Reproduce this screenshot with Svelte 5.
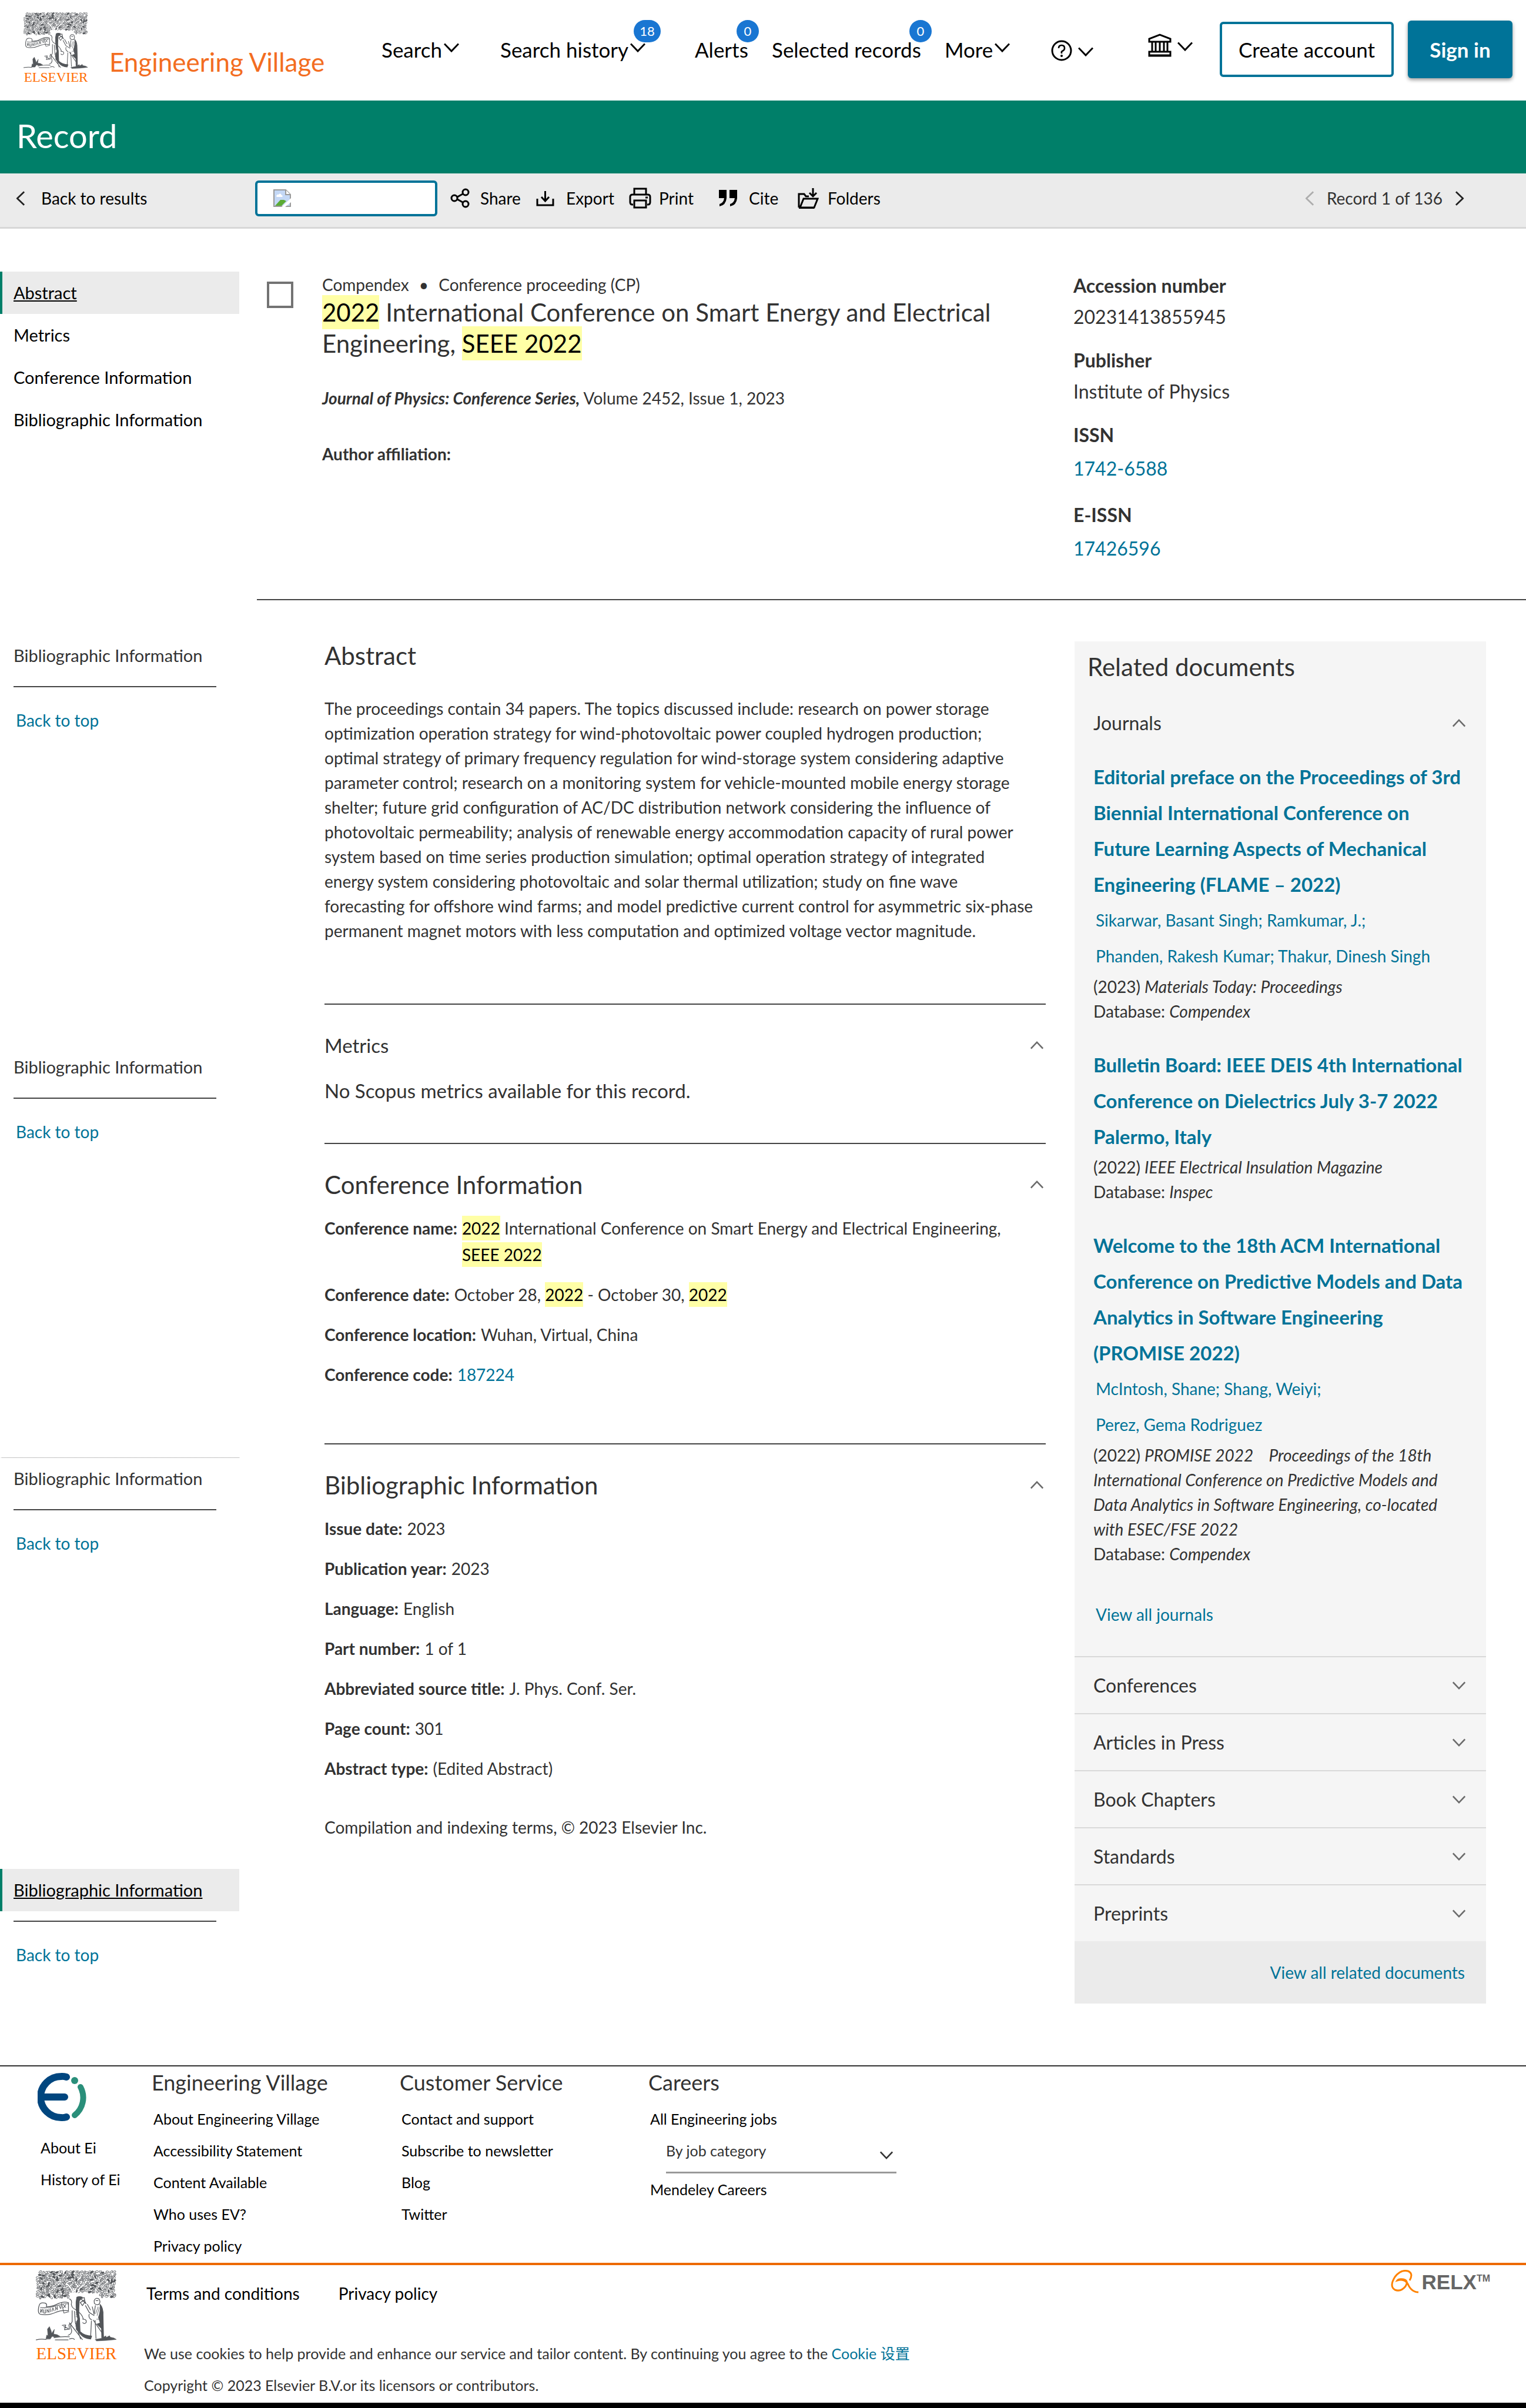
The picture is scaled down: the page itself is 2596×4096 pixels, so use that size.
<script>
    const footerColumns = [
        {
            title: 'Engineering Village',
            links: ['About Engineering Village', 'Accessibility Statement', 'Content Available', 'Who uses EV?', 'Privacy policy']
        },
        {
            title: 'Customer Service',
            links: ['Contact and support', 'Subscribe to newsletter', 'Blog', 'Twitter']
        }
    ];

    const sections = ['Abstract', 'Metrics', 'Conference Information', 'Bibliographic Information'];

    const sideGroups = [{}, {}, { dotted: true }, { active: true }];

    const facts = [
        { name: 'Accession number', value: '20231413855945' },
        { name: 'Publisher', value: 'Institute of Physics' },
        { name: 'ISSN', value: '1742-6588', link: true },
        { name: 'E-ISSN', value: '17426596', link: true }
    ];

    const bibliographic = [
        ['Issue date:', '2023'],
        ['Publication year:', '2023'],
        ['Language:', 'English'],
        ['Part number:', '1 of 1'],
        ['Abbreviated source title:', 'J. Phys. Conf. Ser.'],
        ['Page count:', '301'],
        ['Abstract type:', '(Edited Abstract)']
    ];

    const documents = [
        {
            title: 'Editorial preface on the Proceedings of 3rd Biennial International Conference on Future Learning Aspects of Mechanical Engineering (FLAME – 2022)',
            authors: ['Sikarwar, Basant Singh; Ramkumar, J.;', 'Phanden, Rakesh Kumar; Thakur, Dinesh Singh'],
            year: '(2023)',
            source: 'Materials Today: Proceedings',
            database: 'Compendex'
        },
        {
            title: 'Bulletin Board: IEEE DEIS 4th International Conference on Dielectrics July 3-7 2022 Palermo, Italy',
            authors: [],
            year: '(2022)',
            source: 'IEEE Electrical Insulation Magazine',
            database: 'Inspec'
        },
        {
            title: 'Welcome to the 18th ACM International Conference on Predictive Models and Data Analytics in Software Engineering (PROMISE 2022)',
            authors: ['McIntosh, Shane; Shang, Weiyi;', 'Perez, Gema Rodriguez'],
            year: '(2022)',
            source: 'PROMISE 2022 \u00a0\u00a0 Proceedings of the 18th International Conference on Predictive Models and Data Analytics in Software Engineering, co-located with ESEC/FSE 2022',
            database: 'Compendex'
        }
    ];

    const panels = ['Conferences', 'Articles in Press', 'Book Chapters', 'Standards', 'Preprints'];

    // leaves of the tree, same pattern on every load
    let seed = 7;
    const random = () => {
        seed = (seed * 16807) % 2147483647;
        return seed / 2147483647;
    };

    const fills = ['#fff', '#fff', '#e4e4e5', '#b9babc', '#53565a'];
    const leaves = [];
    for (let row = 0; row < 10; row++) {
        for (let col = 0; col < 29; col++) {
            const x = 184 + col * 22 + random() * 14 - 7;
            const y = 60 + row * 22 + random() * 12 - 6;
            if (y > 220 && x > 430 && x < 690) continue;
            if (y > 262 && x > 400) continue;
            if (x < 200 && y < 90) continue;
            leaves.push({ x, y, angle: random() * 180, fill: fills[Math.floor(random() * 5)] });
        }
    }
</script>

{#snippet chevron(dir = 'down', size = 'md')}
    <svg class="chevron {size} {dir}" viewBox="0 0 26 16" aria-hidden="true">
        <path d="M1 1.500 13 14 25 1.500" />
    </svg>
{/snippet}

{#snippet tree()}
    <svg class="tree" viewBox="168 45 657 575" aria-hidden="true">
        <g stroke="#53565a" stroke-width="4">
            {#each leaves as leaf}
                <ellipse cx={leaf.x} cy={leaf.y} rx="14" ry="7" fill={leaf.fill} transform="rotate({leaf.angle} {leaf.x} {leaf.y})" />
            {/each}
        </g>
        <path d="M470 270C468 200 450 180 430 165M505 262C500 210 520 180 560 160M488 250V190M470 265C480 240 480 220 470 190" fill="none" stroke="#fff" stroke-width="8" />
        <g fill="none" stroke="#53565a" stroke-width="6" stroke-linecap="round" stroke-linejoin="round">
            <path fill="#fff" d="M196 325Q205 300 245 310Q262 320 252 338Q300 340 340 318Q390 292 432 306V372Q380 362 330 384Q270 412 205 400Q188 396 188 368Q188 345 196 325Z" />
            <path stroke-width="5" d="M206 358V385L220 358V385M232 362V390H246V362M258 385V360L274 385V356M286 380V352M298 376 306 348 316 372M328 368V340L342 364V336M356 330 368 354M372 326V350M390 322 410 345M412 320 392 348M205 345Q260 355 340 330T430 318M375 305 395 390 435 380" />
            <path d="M440 275Q465 285 455 320Q460 350 490 362Q545 400 552 438M462 370V460Q440 490 458 530Q460 560 430 570M480 375 488 470 530 600M440 470 545 605M548 440Q582 440 576 466Q562 484 548 468" />
            <path fill="#53565a" d="M500 262Q520 252 545 262L520 290Q515 350 516 400L522 436L522 446L526 540Q560 575 620 576L612 600Q560 596 535 568L496 522V470L508 440Q492 380 494 300Z" />
            <path d="M492 390H515M492 405H515M492 420H515M490 460H520M490 478H520M488 495H520" stroke-width="4" />
            <path d="M530 275 560 265 566 300 545 330 528 305 560 285 575 315 550 290ZM570 330 600 385 640 410M585 320 610 365M600 400Q590 430 620 445M625 340 640 400 650 330M640 290Q650 262 678 275Q695 295 680 318Q660 330 642 312ZM655 290H672M618 455 612 575M648 450 655 595M634 448 662 490 700 545" />
            <path fill="#53565a" d="M688 320Q715 350 712 410L716 585 702 590 700 515 664 480 690 470 676 425Q696 370 688 320Z" />
            <path stroke-width="4" d="M672 340 652 395M682 345 664 410M690 440 660 440" />
            <path fill="#53565a" stroke-width="3" d="M250 600 256 568 266 575 262 520 278 500 292 535 296 555 318 522 312 560 340 565 365 580 320 585 300 578 285 600Z" />
            <path d="M170 607Q210 598 250 604M315 590Q370 578 440 582M325 607H430M440 600Q470 590 480 604M382 490 410 487 400 525 440 520 436 485 450 475M395 500 430 515" />
            <path fill="#53565a" stroke-width="3" d="M650 603 700 595 735 575 738 588 765 574 770 585 800 592 820 604 740 612 660 616Z" />
        </g>
    </svg>
{/snippet}

<header class="top">
    <a class="brand" href="#home">
        <span class="elsevier">{@render tree()}<span>ELSEVIER</span></span>
        <span class="product">Engineering Village</span>
    </a>
    <nav class="menu" aria-label="Main">
        <div><button type="button">Search{@render chevron()}</button></div>
        <div><button type="button">Search history{@render chevron()}<span class="badge">18</span></button></div>
        <div><button type="button">Alerts<span class="badge">0</span></button></div>
        <div><button type="button">Selected records<span class="badge">0</span></button></div>
        <div><button type="button">More{@render chevron()}</button></div>
        <div>
            <button type="button" class="icon-menu help" aria-label="Help">
                <svg width="36" height="36" viewBox="0 0 36 36" aria-hidden="true">
                    <circle cx="18" cy="18" r="16" fill="none" stroke="#000" stroke-width="3" />
                    <path d="M13 14Q13 9 18 9T23 14Q23 17 20 18.500T18 22V23" fill="none" stroke="#000" stroke-width="2.600" />
                    <circle cx="18" cy="27" r="2" />
                </svg>
                {@render chevron()}
            </button>
        </div>
        <div>
            <button type="button" class="icon-menu institution" aria-label="Institution">
                <svg width="40" height="40" viewBox="0 0 40 40" fill="none" stroke="#000" stroke-width="3" aria-hidden="true">
                    <path d="M2 14V9L20 2 38 9V14ZM7 15V31M13 15V31M20 15V31M27 15V31M33 15V31M2 38V31H38V38Z" />
                    <path d="M2 37H38" />
                </svg>
                {@render chevron()}
            </button>
        </div>
    </nav>
    <div class="account">
        <button type="button" class="create">Create account</button>
        <button type="button" class="signin">Sign in</button>
    </div>
</header>

<div class="title-bar"><h1>Record</h1></div>

<div class="toolbar">
    <a class="back" href="#results">{@render chevron('left', 'lg')}Back to results</a>
    <div class="tools">
        <button type="button" class="provider" aria-label="Full text">
            <svg width="30" height="30" viewBox="0 0 30 30" aria-hidden="true">
                <path d="M1 1H21L29 9V29H1Z" fill="#c4d8f6" stroke="#9a9a9a" stroke-width="2" />
                <path d="M21 1V9H29" fill="#fff" stroke="#9a9a9a" stroke-width="2" />
                <path d="M5 12Q6 8 9 9Q12 5 14 10Q17 11 15 13H6Z" fill="#fff" />
                <path d="M3 28 12 18H18L22 20 14 28Z" fill="#5bab35" />
                <path d="M14 30 30 15V22L20 30Z" fill="#fff" />
            </svg>
        </button>
        <button type="button" class="tool">
            <svg width="33" height="34" viewBox="0 0 33 34" fill="none" stroke="#000" stroke-width="3" aria-hidden="true">
                <circle cx="7" cy="17" r="5" /><circle cx="26" cy="7" r="5" /><circle cx="26" cy="27" r="5" />
                <path d="M12 15 21 10M12 19 21 24" />
            </svg>
            <span>Share</span>
        </button>
        <button type="button" class="tool">
            <svg width="31" height="34" viewBox="0 0 31 34" fill="none" stroke="#000" stroke-width="3" aria-hidden="true">
                <path d="M2 18V29H29V18M15.500 5V22M9 15 15.500 22 22 15" />
            </svg>
            <span>Export</span>
        </button>
        <button type="button" class="tool">
            <svg width="38" height="36" viewBox="0 0 38 36" fill="none" stroke="#000" stroke-width="3" aria-hidden="true">
                <path d="M9 12V2H29V12M7 29H6Q2 29 2 25V16Q2 12 6 12H32Q36 12 36 16V25Q36 29 32 29H31M9 22H29V34H9Z" />
                <path d="M28 17H32" />
            </svg>
            <span>Print</span>
        </button>
        <button type="button" class="tool">
            <svg width="31" height="28" viewBox="0 0 31 28" aria-hidden="true">
                <path d="M0 0H13V14Q12 26 1 28V24Q8 22 9 14H0ZM18 0H31V14Q30 26 19 28V24Q26 22 27 14H18Z" />
            </svg>
            <span>Cite</span>
        </button>
        <button type="button" class="tool">
            <svg width="36" height="38" viewBox="0 0 36 38" fill="none" stroke="#000" stroke-width="3" aria-hidden="true">
                <path d="M2 35V12H11L14 16H19M4 35 10 20H34L28 35ZM2 35.500H28M26 2V15M20 10 26 16 32 10" />
            </svg>
            <span>Folders</span>
        </button>
    </div>
    <div class="pager">
        <button type="button" disabled aria-label="Previous record">{@render chevron('left', 'lg')}</button>
        <span>Record 1 of 136</span>
        <button type="button" aria-label="Next record">{@render chevron('right', 'lg')}</button>
    </div>
</div>

<div class="page">
    <aside class="side">
        <nav aria-label="Sections">
            {#each sections as section, i}
                <a class="side-item" class:active={i === 0} href="#section{i}">{section}</a>
            {/each}
        </nav>
        <div class="groups">
            {#each sideGroups as group}
                <div>
                    <a class="side-item grey" class:active={group.active} class:dotted={group.dotted} href="#section3">Bibliographic Information</a>
                    <hr />
                    <a class="to-top" href="#top">Back to top</a>
                </div>
            {/each}
        </div>
    </aside>

    <main>
        <section class="record">
            <input type="checkbox" aria-label="Select record" />
            <div class="summary">
                <p>Compendex <span class="dot">•</span> Conference proceeding (CP)</p>
                <h2><mark>2022</mark> International Conference on Smart Energy and Electrical Engineering, <mark>SEEE 2022</mark></h2>
                <p class="journal"><b><i>Journal of Physics: Conference Series,</i></b> Volume 2452, Issue 1, 2023</p>
                <p class="affiliation"><b>Author affiliation:</b></p>
            </div>
            <dl class="facts">
                {#each facts as fact}
                    <div>
                        <dt>{fact.name}</dt>
                        {#if fact.link}
                            <dd class="linked"><a href="#search">{fact.value}</a></dd>
                        {:else}
                            <dd>{fact.value}</dd>
                        {/if}
                    </div>
                {/each}
            </dl>
        </section>

        <div class="columns">
            <div class="content">
                <section class="block abstract" id="section0">
                    <h3>Abstract</h3>
                    <p>
                        The proceedings contain 34 papers. The topics discussed include: research on power storage<br />
                        optimization operation strategy for wind-photovoltaic power coupled hydrogen production;<br />
                        optimal strategy of primary frequency regulation for wind-storage system considering adaptive<br />
                        parameter control; research on a monitoring system for vehicle-mounted mobile energy storage<br />
                        shelter; future grid configuration of AC/DC distribution network considering the influence of<br />
                        photovoltaic permeability; analysis of renewable energy accommodation capacity of rural power<br />
                        system based on time series production simulation; optimal operation strategy of integrated<br />
                        energy system considering photovoltaic and solar thermal utilization; study on fine wave<br />
                        forecasting for offshore wind farms; and model predictive current control for asymmetric six-phase<br />
                        permanent magnet motors with less computation and optimized voltage vector magnitude.
                    </p>
                </section>

                <section class="block metrics" id="section1">
                    <h3 class="small"><button type="button">Metrics{@render chevron('up', 'sm')}</button></h3>
                    <p>No Scopus metrics available for this record.</p>
                </section>

                <section class="block conference" id="section2">
                    <h3><button type="button">Conference Information{@render chevron('up', 'sm')}</button></h3>
                    <dl class="list">
                        <div>
                            <dt>Conference name:</dt>
                            <dd><mark>2022</mark> International Conference on Smart Energy and Electrical Engineering, <mark>SEEE 2022</mark></dd>
                        </div>
                        <div>
                            <dt>Conference date:</dt>
                            <dd>October 28, <mark>2022</mark> - October 30, <mark>2022</mark></dd>
                        </div>
                        <div><dt>Conference location:</dt><dd>Wuhan, Virtual, China</dd></div>
                        <div><dt>Conference code:</dt><dd><a href="#code">187224</a></dd></div>
                    </dl>
                </section>

                <section class="block bibliographic" id="section3">
                    <h3><button type="button">Bibliographic Information{@render chevron('up', 'sm')}</button></h3>
                    <dl class="list">
                        {#each bibliographic as [name, value]}
                            <div><dt>{name}</dt><dd>{value}</dd></div>
                        {/each}
                    </dl>
                    <p class="rights">Compilation and indexing terms, © 2023 Elsevier Inc.</p>
                </section>
            </div>

            <aside class="related">
                <h3>Related documents</h3>
                <button type="button" class="panel open">Journals{@render chevron('up', 'sm')}</button>
                <div class="documents">
                    {#each documents as doc}
                        <article>
                            <a class="doc-title" href="#doc">{doc.title}</a>
                            {#each doc.authors as line}
                                <a class="author" href="#author">{line}</a>
                            {/each}
                            <p>{doc.year} <i>{doc.source}</i></p>
                            <p>Database: <i>{doc.database}</i></p>
                        </article>
                    {/each}
                    <a class="author all" href="#journals">View all journals</a>
                </div>
                {#each panels as panel}
                    <button type="button" class="panel">{panel}{@render chevron('down', 'sm')}</button>
                {/each}
                <div class="all-related"><a href="#related">View all related documents</a></div>
            </aside>
        </div>
    </main>
</div>

<footer>
    <div class="footer-links">
        <div class="ei">
            <svg width="84" height="84" viewBox="0 0 84 84" fill="none" stroke-linecap="round" aria-hidden="true">
                <path d="M49 8Q44 6.500 40 7A34 34 0 0 0 40 77Q44 77.500 49 76M12 42H46" stroke="#00467f" stroke-width="12" />
                <circle cx="63" cy="14" r="6" fill="#2a8f7a" />
                <path d="M73 25C82 42 77 62 63 73" stroke="#2a8f7a" stroke-width="10" />
            </svg>
            <a href="#about">About Ei</a>
            <a href="#history">History of Ei</a>
        </div>
        {#each footerColumns as column}
            <div class="footer-column">
                <h4>{column.title}</h4>
                {#each column.links as link}
                    <a href="#footer">{link}</a>
                {/each}
            </div>
        {/each}
        <div class="footer-column">
            <h4>Careers</h4>
            <a href="#jobs">All Engineering jobs</a>
            <div class="select">
                <select aria-label="By job category">
                    <option>By job category</option>
                </select>
                {@render chevron('down', 'sm')}
            </div>
            <a href="#mendeley">Mendeley Careers</a>
        </div>
    </div>
    <div class="legal">
        <span class="elsevier large">{@render tree()}<span>ELSEVIER</span></span>
        <div class="legal-text">
            <div class="policies"><a href="#terms">Terms and conditions</a><a href="#privacy">Privacy policy</a></div>
            <p>We use cookies to help provide and enhance our service and tailor content. By continuing you agree to the <a href="#cookies">Cookie 设置</a></p>
            <p>Copyright © 2023 Elsevier B.V.or its licensors or contributors.</p>
        </div>
        <div class="relx">
            <svg width="50" height="40" viewBox="0 0 50 40" fill="none" stroke="#ff8200" stroke-width="3" aria-hidden="true">
                <path d="M33 18Q40 6 30 2Q18 -1 8 12Q-2 28 8 34Q18 38 26 28Q32 18 22 16Q14 15 12 18Q24 14 30 24Q36 38 48 38" />
            </svg>
            <span>RELX<sup>TM</sup></span>
        </div>
    </div>
</footer>

<style>
    :global(body) {
        margin: 0;
        background: #fff;
        color: #323232;
        font-family: Lato, "Noto Sans CJK SC", sans-serif;
        font-size: 28px;
        line-height: 42px;
    }

    button, input, select {
        font: inherit;
        color: inherit;
        margin: 0;
        padding: 0;
        border: 0;
        background: none;
    }

    a {
        color: #007398;
        text-decoration: none;
    }

    h1, h2, h3, h4, p, dl, dd {
        margin: 0;
        font-weight: 400;
    }

    mark {
        background: #ffffa6;
        color: #000;
        padding: 4px 0;
        white-space: nowrap;
    }

    .chevron {
        width: 26px;
        height: 16px;
        flex: none;
        fill: none;
        stroke: #000;
        stroke-width: 3;
    }

    .chevron.sm {
        width: 22px;
        height: 14px;
        stroke: #6b6b6b;
    }

    .chevron.lg {
        height: 15px;
        stroke: #222;
    }

    .up {
        transform: rotate(180deg);
    }

    .left {
        transform: rotate(90deg);
    }

    .right {
        transform: rotate(-90deg);
    }

    /* header */
    .top {
        display: flex;
        align-items: center;
        height: 167px;
        padding: 0 23px 4px 40px;
        color: #000;
        font-size: 35px;
    }

    .brand {
        flex: 1;
        display: flex;
        align-items: center;
        gap: 36px;
        white-space: nowrap;
    }

    .elsevier {
        display: flex;
        flex-direction: column;
        align-items: center;
        width: 110px;
        color: #ff6c00;
        font-family: "Liberation Serif", serif;
        font-size: 23px;
        line-height: 28px;
    }

    .elsevier.large {
        width: 138px;
        font-size: 29px;
        line-height: 40px;
    }

    .tree {
        width: 100%;
    }

    .product {
        color: #f36d21;
        font-size: 44px;
        padding-top: 44px;
    }

    .menu {
        display: grid;
        grid-template-columns: 202px 331px 131px 294px 181px 165px 122px;
        align-items: center;
    }

    .menu button {
        position: relative;
        display: flex;
        align-items: center;
        gap: 3px;
        white-space: nowrap;
    }

    .menu .chevron {
        margin-bottom: 5px;
    }

    .menu .icon-menu {
        gap: 10px;
    }

    .menu .icon-menu .chevron {
        margin: 5px 0 0;
    }

    .help {
        padding-top: 4px;
    }

    .institution {
        padding-bottom: 14px;
    }

    .badge {
        position: absolute;
        left: calc(100% - 20px);
        bottom: 33px;
        min-width: 38px;
        height: 38px;
        padding: 0 10px;
        box-sizing: border-box;
        border-radius: 19px;
        background: #1976d2;
        color: #fff;
        font-size: 22px;
        line-height: 38px;
        text-align: center;
    }

    .account {
        display: flex;
        align-items: center;
        gap: 24px;
    }

    .create {
        width: 296px;
        height: 94px;
        border: 4px solid #007398;
        border-radius: 6px;
    }

    .signin {
        width: 178px;
        height: 98px;
        border-radius: 6px;
        background: #007398;
        color: #fff;
        font-weight: 700;
        box-shadow: 0 3px 6px rgba(0, 0, 0, 0.4);
    }

    .title-bar {
        display: flex;
        align-items: center;
        height: 120px;
        padding: 0 28px 4px;
        background: #007f69;
        color: #fff;
    }

    h1 {
        font-size: 56px;
    }

    /* toolbar */
    .toolbar {
        display: flex;
        align-items: center;
        height: 84px;
        padding: 0 100px 7px 22px;
        border-bottom: 3px solid #d7d7d7;
        background: #ebebeb;
    }

    .back {
        display: flex;
        align-items: center;
        gap: 22px;
        width: 412px;
        color: #000;
    }

    .tools {
        flex: 1;
        display: grid;
        grid-template-columns: 332px 146px 158px 153px 134px 150px;
        align-items: center;
        color: #000;
    }

    .provider {
        width: 310px;
        height: 61px;
        box-sizing: border-box;
        padding-left: 27px;
        border: 4px solid #007398;
        border-radius: 6px;
        background: #fff;
        text-align: left;
    }

    .provider svg {
        display: block;
    }

    .tool {
        display: grid;
        grid-template-columns: 51px auto;
        justify-content: start;
        align-items: center;
    }

    .pager {
        display: flex;
        align-items: center;
        gap: 16px;
    }

    .pager button {
        display: flex;
    }

    .pager button:disabled {
        opacity: 0.3;
    }

    /* page */
    .page {
        display: grid;
        grid-template-columns: 407px minmax(0, 1fr);
        column-gap: 30px;
        padding: 3px 0 105px;
    }

    .side {
        padding-top: 70px;
    }

    .side-item {
        display: block;
        box-sizing: border-box;
        height: 72px;
        padding-left: 19px;
        border-left: 4px solid transparent;
        color: #000;
        font-size: 29px;
        line-height: 72px;
    }

    .side-item.grey {
        color: #323232;
    }

    .side-item.active {
        border-left-color: #007f69;
        background: #ebebeb;
        color: #000;
        text-decoration: underline;
    }

    .side-item.dotted {
        border-top: 1px dotted #888;
        line-height: 70px;
    }

    .groups {
        display: flex;
        flex-direction: column;
        gap: 517px;
        margin-top: 329px;
    }

    .groups hr {
        margin: 16px 39px 20px 23px;
        border: 0;
        border-top: 2px solid #444;
    }

    .to-top {
        display: block;
        padding-left: 27px;
        line-height: 73px;
    }

    .record {
        display: grid;
        grid-template-columns: 45px minmax(0, 1fr) 770px;
        column-gap: 49px;
        height: 560px;
        padding: 67px 0 0 17px;
        border-bottom: 2px solid #444;
    }

    .record input {
        appearance: none;
        width: 45px;
        height: 45px;
        margin-top: 20px;
        box-sizing: border-box;
        border: 4px solid #737373;
        background: #fff;
    }

    .summary {
        padding-top: 4px;
    }

    .dot {
        margin: 0 10px;
    }

    .summary h2 {
        font-size: 42px;
        line-height: 53px;
    }

    .journal {
        margin-top: 45px;
    }

    .affiliation {
        margin-top: 53px;
    }

    .facts {
        font-size: 32px;
        line-height: 53px;
    }

    .facts div {
        margin-bottom: 21px;
    }

    dt {
        font-weight: 700;
    }

    .linked {
        line-height: 62px;
    }

    .columns {
        display: grid;
        grid-template-columns: minmax(0, 1fr) 700px;
        column-gap: 49px;
        align-items: start;
        margin: 0 68px 0 115px;
    }

    .block {
        padding-top: 42px;
        border-top: 2px solid #444;
    }

    h3 {
        font-size: 42px;
        line-height: 54px;
    }

    h3.small {
        font-size: 33px;
    }

    h3 button {
        display: flex;
        justify-content: space-between;
        align-items: center;
        width: 100%;
        padding-right: 4px;
    }

    .abstract {
        padding: 67px 0 103px;
        border-top: 0;
    }

    .abstract p {
        margin-top: 42px;
        white-space: nowrap;
    }

    .metrics {
        padding-bottom: 62px;
    }

    .metrics p {
        margin-top: 23px;
        font-size: 33px;
        line-height: 54px;
    }

    .conference {
        padding-bottom: 94px;
    }

    .list {
        display: grid;
        row-gap: 23px;
        margin-top: 25px;
        line-height: 45px;
    }

    .list div {
        display: flex;
        gap: 8px;
    }

    .list dt {
        flex: none;
    }

    .rights {
        margin-top: 56px;
    }

    /* related documents */
    .related {
        margin-top: 70px;
        background: #f5f5f5;
    }

    .related h3 {
        padding: 16px 22px 42px;
    }

    .panel {
        display: flex;
        justify-content: space-between;
        align-items: center;
        width: 100%;
        height: 97px;
        padding: 0 35px 0 32px;
        border-top: 2px solid #d9d9d9;
        font-size: 32px;
    }

    .panel.open {
        height: 54px;
        border-top: 0;
    }

    .documents {
        padding: 34px 32px 40px;
    }

    .doc-title {
        display: block;
        font-size: 33px;
        font-weight: 700;
        line-height: 61px;
    }

    .author {
        display: block;
        padding-left: 4px;
        line-height: 61px;
    }

    article {
        margin-bottom: 40px;
    }

    .all {
        margin-top: 52px;
    }

    .all-related {
        padding: 0 36px;
        background: #ebebeb;
        line-height: 106px;
        text-align: right;
    }

    /* footer */
    footer {
        border-top: 2px solid #323232;
        border-bottom: 10px solid #000;
    }

    footer a {
        color: #000;
    }

    .footer-links {
        display: grid;
        grid-template-columns: 194px 422px 423px 422px;
        padding: 0 64px 2px;
        border-bottom: 4px solid #ed6a00;
        font-size: 25px;
        line-height: 54px;
    }

    .ei {
        padding-top: 10px;
    }

    .ei svg {
        display: block;
        margin-bottom: 17px;
    }

    .ei a {
        display: block;
        padding-left: 5px;
        white-space: nowrap;
    }

    .footer-column a {
        display: block;
        padding-left: 3px;
    }

    h4 {
        margin-bottom: 8px;
        font-size: 36px;
    }

    .select {
        position: relative;
        width: 392px;
        margin-left: 30px;
    }

    .select select {
        appearance: none;
        display: block;
        width: 100%;
        height: 66px;
        padding-bottom: 10px;
        border-bottom: 3px solid #999;
    }

    .select .chevron {
        position: absolute;
        right: 6px;
        top: 28px;
        stroke: #333;
        pointer-events: none;
    }

    .legal {
        display: flex;
        align-items: flex-start;
        height: 234px;
        padding: 0 61px;
    }

    .legal .elsevier {
        padding-top: 9px;
        margin-right: 46px;
    }

    .legal-text {
        flex: 1;
        padding-top: 21px;
        font-size: 25px;
        line-height: 54px;
    }

    .policies {
        display: flex;
        gap: 66px;
        padding: 0 4px;
        margin-bottom: 48px;
        font-size: 28px;
    }

    .legal-text p a {
        color: #007398;
    }

    .relx {
        display: flex;
        gap: 4px;
        padding-top: 8px;
        color: #666;
        font-family: "Liberation Sans", sans-serif;
        font-size: 35px;
        font-weight: 700;
    }

    .relx sup {
        font-size: 16px;
        line-height: 16px;
    }
</style>
